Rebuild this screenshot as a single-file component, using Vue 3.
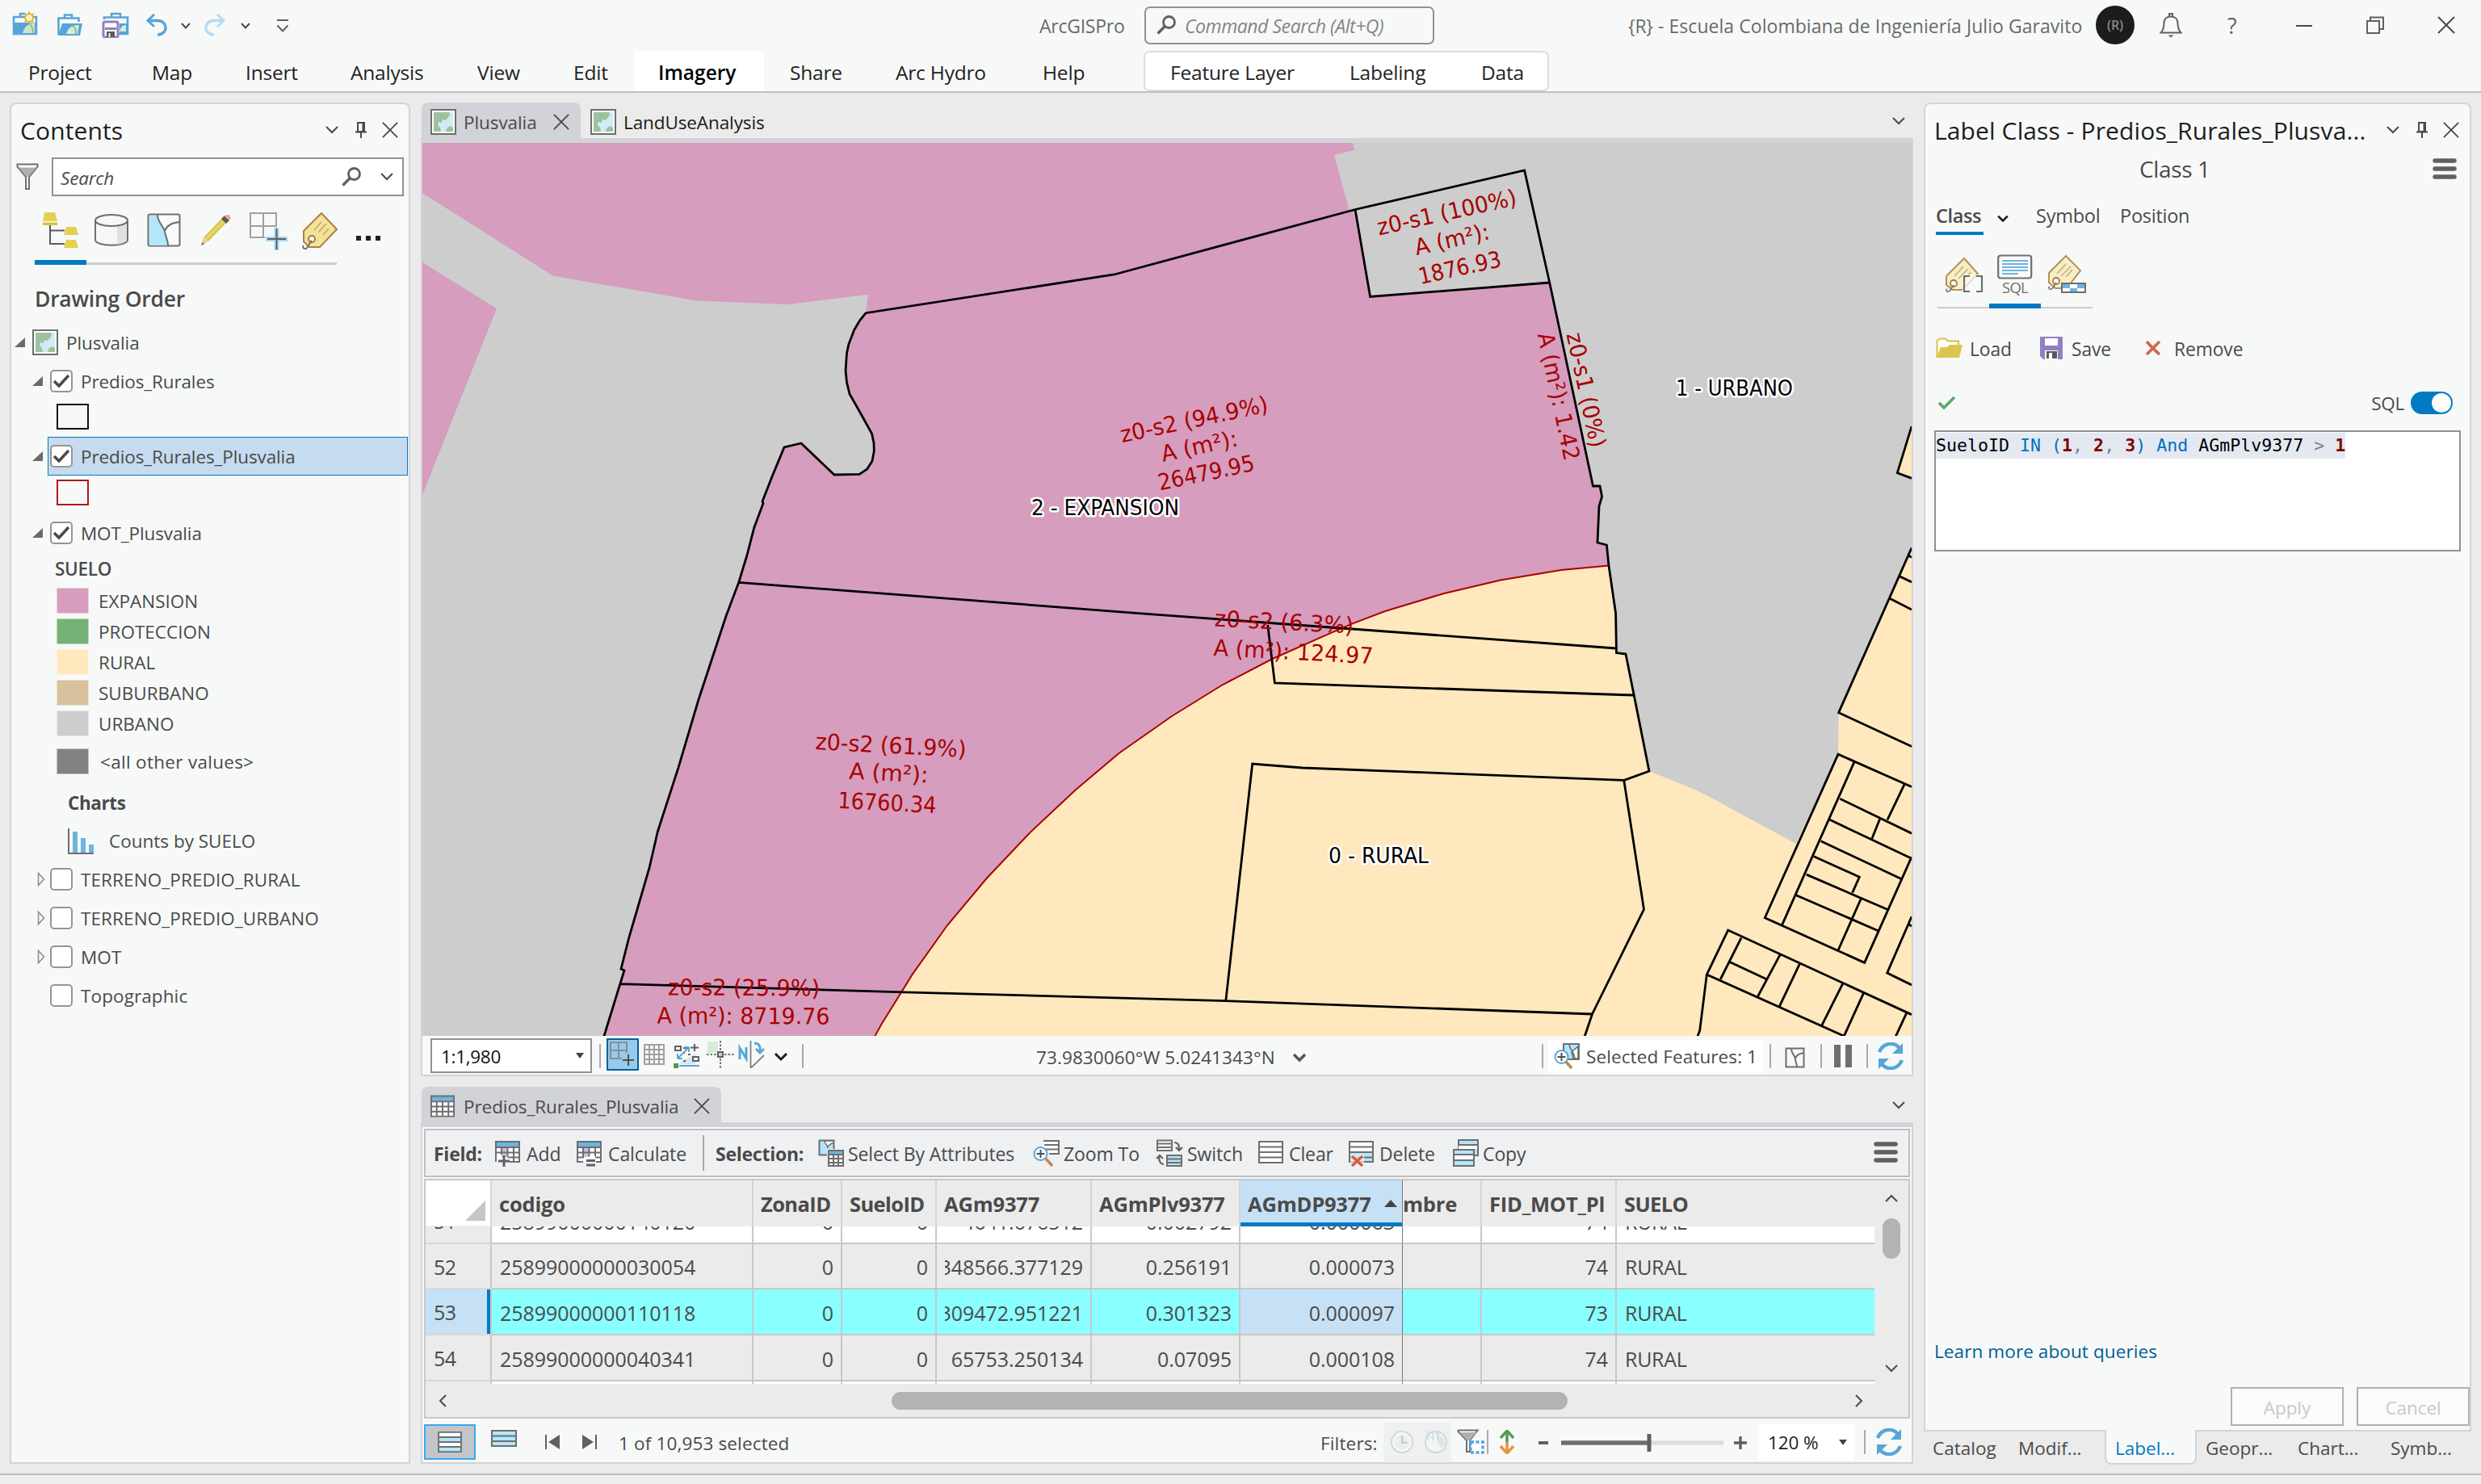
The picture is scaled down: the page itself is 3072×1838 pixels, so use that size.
<script setup>
import { h } from 'vue'

// A horizontal strip: every item starts at `at`, and its slot reaches to the next item.
const Bar = (props) => {
  const { items, from, to } = props
  return h('div', { class: 'bar' }, items.map((it, n) => {
    const next = n + 1 < items.length ? items[n + 1].at : to
    const style = { width: next - it.at + 'px' }
    if (n === 0) style.marginLeft = it.at - from + 'px'
    const inner = []
    if (it.icon) {
      inner.push(h('svg', { width: it.w, height: it.h, style: it.dy ? { marginTop: it.dy + 'px' } : undefined }, [h('use', { href: '#' + it.icon })]))
      if (it.cap) inner.push(h('span', { class: 'cap' }, it.cap))
    } else if (it.sep) {
      inner.push(h('i', { class: 'sep', style: { height: it.sep + 'px' } }))
    } else {
      inner.push(h('span', { class: it.cls }, it.text))
    }
    return h('div', { class: it.cap ? 'slot capped' : 'slot', style }, inner)
  }))
}
Bar.props = ['items', 'from', 'to']

const titleBar = [
  { at: 15, icon: 'newproj', w: 32, h: 30, dy: -4 },
  { at: 70, icon: 'openproj', w: 32, h: 30, dy: -2 },
  { at: 126, icon: 'saveproj', w: 34, h: 32 },
  { at: 180, icon: 'undo', w: 28, h: 28 },
  { at: 224, icon: 'chev', w: 12, h: 8, dy: 1 },
  { at: 252, icon: 'redo', w: 28, h: 28 },
  { at: 298, icon: 'chev', w: 12, h: 8, dy: 1 },
  { at: 342, icon: 'custom', w: 16, h: 18, dy: 2 },
  { at: 1287, text: 'ArcGISPro', cls: 'ttl' }
]
const titleRight = [
  { at: 2016, text: '{R}', cls: 'ttl' },
  { at: 2053, text: '- Escuela Colombiana de Ingeniería Julio Garavito', cls: 'ttl esc' },
  { at: 2595, text: '(R)', cls: 'avatar' },
  { at: 2674, icon: 'bell', w: 28, h: 32 },
  { at: 2758, text: '?', cls: 'help' },
  { at: 2842, icon: 'mini', w: 22, h: 4, dy: 2 },
  { at: 2930, icon: 'restore', w: 22, h: 22 },
  { at: 3018, icon: 'close', w: 22, h: 22 }
]
const ribbon = [
  { label: 'Project', pad: 35, w: 157 }, { label: 'Map', pad: 31, w: 114 },
  { label: 'Insert', pad: 33, w: 99 }, { label: 'Analysis', pad: 64, w: 161 },
  { label: 'View', pad: 60, w: 148 }, { label: 'Edit', pad: 31, w: 106 },
  { label: 'Imagery', pad: 30, w: 161, on: true }, { label: 'Share', pad: 32, w: 131 },
  { label: 'Arc Hydro', pad: 32, w: 182 }, { label: 'Help', pad: 32, w: 157 }
]
const context = [
  { at: 1449, text: 'Feature Layer' }, { at: 1671, text: 'Labeling' }, { at: 1834, text: 'Data' }
]
const contentsTools = [
  { at: 53, icon: 'tree', w: 44, h: 44 },
  { at: 117, icon: 'cyl', w: 42, h: 40 },
  { at: 182, icon: 'mapsel', w: 42, h: 42 },
  { at: 246, icon: 'pencil', w: 42, h: 42 },
  { at: 308, icon: 'snap', w: 48, h: 48, dy: 2 },
  { at: 374, icon: 'tag', w: 44, h: 46, dy: 1 },
  { at: 440, icon: 'dots', w: 34, h: 8, dy: 20 }
]
const classes = [
  ['EXPANSION', 'expansion'], ['PROTECCION', 'proteccion'], ['RURAL', 'rural'],
  ['SUBURBANO', 'suburbano'], ['URBANO', 'urbano']
]
const mapTools = [
  { at: 742, sep: 30 },
  { at: 751, icon: 'snapon', w: 40, h: 40, dy: -3 },
  { at: 796, icon: 'grid', w: 28, h: 28, dy: -3 },
  { at: 834, icon: 'survey', w: 34, h: 32, dy: 0 },
  { at: 875, icon: 'cross', w: 34, h: 34, dy: -3 },
  { at: 914, icon: 'north', w: 34, h: 34, dy: -3 },
  { at: 958, icon: 'chevb', w: 18, h: 12, dy: 2 },
  { at: 993, sep: 30 },
  { at: 1283, text: '73.9830060°W 5.0241343°N', cls: 'coord' },
  { at: 1600, icon: 'chevg', w: 18, h: 12, dy: 4 },
  { at: 1909, sep: 30 }
]
const mapRight = [
  { at: 2191, sep: 30 },
  { at: 2210, icon: 'mapout', w: 26, h: 26, dy: 4 },
  { at: 2254, sep: 30 },
  { at: 2271, icon: 'pause', w: 22, h: 28 },
  { at: 2311, sep: 30 },
  { at: 2323, icon: 'refresh', w: 36, h: 34 }
]
const tableTools = [
  { at: 537, text: 'Field:', cls: 'b' },
  { at: 613, icon: 'tadd', w: 32, h: 32, dy: 1 }, { at: 652, text: 'Add' },
  { at: 714, icon: 'tcalc', w: 32, h: 32, dy: 1 }, { at: 753, text: 'Calculate' },
  { at: 870, sep: 44 },
  { at: 886, text: 'Selection:', cls: 'b' },
  { at: 1013, icon: 'selattr', w: 32, h: 34 }, { at: 1050, text: 'Select By Attributes' },
  { at: 1279, icon: 'zoomto', w: 34, h: 34 }, { at: 1317, text: 'Zoom To' },
  { at: 1431, icon: 'switch', w: 34, h: 34 }, { at: 1470, text: 'Switch' },
  { at: 1558, icon: 'clear', w: 32, h: 28, dy: -2 }, { at: 1596, text: 'Clear' },
  { at: 1670, icon: 'delete', w: 32, h: 32, dy: 1 }, { at: 1708, text: 'Delete' },
  { at: 1799, icon: 'copy', w: 32, h: 34 }, { at: 1836, text: 'Copy' },
  { at: 2320, icon: 'burger', w: 30, h: 28, dy: -2 }
]
const cols = [
  { k: 'codigo', w: 324, t: 'codigo' },
  { k: 'zona', w: 110, t: 'ZonaID', r: true },
  { k: 'sid', w: 117, t: 'SueloID', r: true },
  { k: 'agm', w: 192, t: 'AGm9377', r: true },
  { k: 'plv', w: 184, t: 'AGmPlv9377', r: true },
  { k: 'dp', w: 201, t: 'AGmDP9377', r: true },
  { k: 'nombre', w: 98, t: 'mbre' },
  { k: 'fid', w: 167, t: 'FID_MOT_Pl', r: true },
  { k: 'use', w: 319, t: 'SUELO' }
]
const rows = [
  { n: '51', codigo: '25899000000140120', zona: '0', sid: '0', agm: '4641.676512', plv: '0.002792', dp: '0.000063', fid: '74', use: 'RURAL' },
  { n: '52', codigo: '25899000000030054', zona: '0', sid: '0', agm: '348566.377129', plv: '0.256191', dp: '0.000073', fid: '74', use: 'RURAL' },
  { n: '53', codigo: '25899000000110118', zona: '0', sid: '0', agm: '309472.951221', plv: '0.301323', dp: '0.000097', fid: '73', use: 'RURAL' },
  { n: '54', codigo: '25899000000040341', zona: '0', sid: '0', agm: '65753.250134', plv: '0.07095', dp: '0.000108', fid: '74', use: 'RURAL' },
  { n: '', codigo: '' }
]
const statusLeft = [
  { at: 608, icon: 'rowsel', w: 32, h: 22, dy: -8 },
  { at: 674, icon: 'first', w: 20, h: 20, dy: 0 },
  { at: 720, icon: 'last', w: 20, h: 20, dy: 0 },
  { at: 766, text: '1 of 10,953 selected', cls: 'stat' },
  { at: 1635, text: 'Filters:', cls: 'stat' }
]
const statusRight = [
  { at: 1804, icon: 'filtsel', w: 36, h: 32 },
  { at: 1841, sep: 30 },
  { at: 1856, icon: 'updown', w: 20, h: 30 },
  { at: 1904, icon: 'minus', w: 14, h: 6, dy: 2 },
  { at: 1932, icon: 'slider', w: 202, h: 24, dy: 2 },
  { at: 2146, icon: 'plus', w: 18, h: 18, dy: 2 }
]
const statusEnd = [
  { at: 2308, sep: 30 },
  { at: 2321, icon: 'refresh', w: 36, h: 34, dy: 1 }
]
const labelTools = [
  { at: 2408, icon: 'tagexp', w: 48, h: 46, dy: 2 },
  { at: 2473, icon: 'sqldoc', w: 44, h: 31, cap: 'SQL' },
  { at: 2536, icon: 'tagfld', w: 48, h: 48, dy: -2 }
]
const fileTools = [
  { at: 2397, icon: 'folder', w: 34, h: 26 }, { at: 2439, text: 'Load', cls: 'ft' },
  { at: 2526, icon: 'floppy', w: 28, h: 28 }, { at: 2565, text: 'Save', cls: 'ft' },
  { at: 2656, icon: 'redx', w: 20, h: 20 }, { at: 2692, text: 'Remove', cls: 'ft' }
]
const dockTabs = [
  { t: 'Catalog', w: 104, p: 9 }, { t: 'Modif...', w: 118, p: 11 }, { t: 'Label...', w: 114, p: 11, on: true },
  { t: 'Geopr...', w: 114, p: 11 }, { t: 'Chart...', w: 114, p: 11 }, { t: 'Symb...', w: 110, p: 12 }
]
const mapLabels = [
  { a: -12.5, l: [['z0-s1 (100%)', 1793.5, 272.5, 176], ['A (m²):', 1800, 306, 94], ['1876.93', 1809.5, 341, 104]] },
  { a: -12, l: [['z0-s2 (94.9%)', 1480.5, 529, 186], ['A (m²):', 1487, 562, 96], ['26479.95', 1495.5, 595, 121]] },
  { a: 3, l: [['z0-s2 (61.9%)', 1102.5, 933, 187], ['A (m²):', 1100, 967, 98], ['16760.34', 1098, 1004, 122]] },
  { a: 0.3, l: [['z0-s2 (25.9%)', 921, 1233, 188], ['A (m²): 8719.76', 920.5, 1268, 214]] },
  { a: 3, l: [['z0-s2 (6.3%)', 1589.5, 780, 172], ['A (m²): 124.97', 1601, 817, 198]] },
  { a: 78, l: [['z0-s1 (0%)', 1954.5, 485, 145], ['A (m²): 1.42', 1920.5, 493, 161]] }
]
const zoneLabels = [['2 - EXPANSION', 1277, 638, 183], ['1 - URBANO', 2075, 490, 145], ['0 - RURAL', 1645, 1069, 124]]
</script>

<template>
  <svg class="defs" width="0" height="0">
    <symbol id="chev" viewBox="0 0 12 8"><path d="M1 1l5 5.5L11 1" fill="none" stroke="#4a4a4a" stroke-width="2" /></symbol>
    <symbol id="chevl" viewBox="0 0 16 10"><path d="M1 1l7 7 7-7" fill="none" stroke="#4a4a4a" stroke-width="2" /></symbol>
    <symbol id="chevb" viewBox="0 0 18 12"><path d="M2 2l7 7 7-7" fill="none" stroke="#1a1a1a" stroke-width="3" /></symbol>
    <symbol id="chevg" viewBox="0 0 18 12"><path d="M2 2l7 7 7-7" fill="none" stroke="#555" stroke-width="3.4" /></symbol>
    <symbol id="close" viewBox="0 0 22 22"><path d="M1 1l20 20M21 1L1 21" fill="none" stroke="#4a4a4a" stroke-width="2" /></symbol>
    <symbol id="pin" viewBox="0 0 14 20"><path d="M3 1h8v11H3zM9.500 1v11M0 12.500h14M7 13v7" fill="none" stroke="#4a4a4a" stroke-width="2" /></symbol>
    <symbol id="mag" viewBox="0 0 24 24"><circle cx="15.500" cy="8.500" r="7" fill="none" stroke="#606060" stroke-width="2.800" /><path d="M10.500 13.500L1.500 22.500" stroke="#606060" stroke-width="3.400" /></symbol>
    <symbol id="newproj" viewBox="0 0 32 30"><path d="M2 7h28v21H2z" fill="#f7f9f8" stroke="#56a5d8" stroke-width="2.500" /><path d="M10 7V3h6" fill="none" stroke="#56a5d8" stroke-width="2.500" /><path d="M2 14h28v14H2z" fill="#56a5d8" /><path d="M13 27c2-8 7-12 15-13v13z" fill="#cfe3c9" /><path d="M21 15c4 3 5 8 5 12" fill="none" stroke="#8fbf8a" stroke-width="2" /><path d="M21 0v16M13 8h16M15.500 2.500l11 11M26.500 2.500l-11 11" stroke="#d9a928" stroke-width="1.600" /><circle cx="21" cy="8" r="5" fill="#fbf0b8" stroke="#d9a928" stroke-width="1.500" /></symbol>
    <symbol id="openproj" viewBox="0 0 32 30"><path d="M2.500 28V7.500h25V12M10 7V3.500h9V7" fill="none" stroke="#56a5d8" stroke-width="2.600" /><path d="M7 14h25l-3 15H2z" fill="#56a5d8" /><path d="M12 27c2-7 6-11 16-11l-2 11z" fill="#d8ecd8" /><path d="M20 17c4 3 4 6 4 10" fill="none" stroke="#8fbf8a" stroke-width="2" /></symbol>
    <symbol id="saveproj" viewBox="0 0 34 32"><path d="M3 9V6.500h29V27H20M12 6V2h11v4" fill="none" stroke="#56a5d8" stroke-width="2.600" /><path d="M22 14h9v12h-9z" fill="#56a5d8" /><path d="M22 24c1-5 4-8 8-8v8z" fill="#d8ecd8" /><rect x="2" y="12" width="18" height="19" rx="2" fill="#fff" stroke="#9180c0" stroke-width="3" /><path d="M4 20.500h14" stroke="#9180c0" stroke-width="3" /><path d="M6 24h10v7H6z" fill="#5a5a5a" /><path d="M8.500 26h2v5h-2z" fill="#fff" /></symbol>
    <symbol id="undo" viewBox="0 0 28 28"><path d="M3 8.500h12c13 0 14 17 0 17.500" fill="none" stroke="#56a5d8" stroke-width="3.400" /><path d="M11 1L3 8.500l8 7.500" fill="none" stroke="#56a5d8" stroke-width="3" /></symbol>
    <symbol id="redo" viewBox="0 0 28 28"><path d="M25 8.500H13c-13 0-14 17 0 17.500" fill="none" stroke="#b7d9ef" stroke-width="3.400" /><path d="M17 1l8 7.500-8 7.500" fill="none" stroke="#b7d9ef" stroke-width="3" /></symbol>
    <symbol id="custom" viewBox="0 0 16 18"><path d="M1 2h14" stroke="#606060" stroke-width="2" /><path d="M1.500 8.500L8 15.500l6.500-7" fill="none" stroke="#606060" stroke-width="2" /></symbol>
    <symbol id="bell" viewBox="0 0 28 32"><path d="M1.500 25.500h25C23 22 22.500 19 22.500 13.500c0-5.500-4-8-8.500-8s-8.500 2.500-8.500 8c0 5.500-.5 8.500-4 12zM12 5V2h4v3" fill="none" stroke="#606060" stroke-width="2" /><path d="M10.500 28.500h7l-3.500 3z" fill="#606060" /></symbol>
    <symbol id="mini" viewBox="0 0 22 4"><path d="M1 2h20" stroke="#4a4a4a" stroke-width="2" /></symbol>
    <symbol id="restore" viewBox="0 0 22 22"><path d="M1 6h15v15H1zM5 6V1.500h16V16h-5" fill="none" stroke="#606060" stroke-width="2" /></symbol>
    <symbol id="funnel" viewBox="0 0 28 34"><path d="M1.500 1.500h25v3L16 17v15h-4V17L1.500 4.500z" fill="#fff" stroke="#6e6e6e" stroke-width="2" /><path d="M3 5.500h22L15.500 17h-3z" fill="#b0b0b0" /></symbol>
    <symbol id="mapicon" viewBox="0 0 32 32"><path d="M1 1h30v30H1z" fill="#fff" stroke="#6e6e6e" stroke-width="2" /><path d="M4 4h24v24H4z" fill="#9cc29b" /><path d="M24 4h4v19l-4-2-4 3-1 4h-6l-1-5-3-3 1-4 4 1 1-4 4 1 4-5z" fill="#d3e9f7" /></symbol>
    <symbol id="tree" viewBox="0 0 44 44"><path d="M2 0h13l3 11H0z" fill="#e4d04f" /><path d="M0 12.500h18V16H0z" fill="#d8c238" /><path d="M9 16v23h18M9 22.500h18" fill="none" stroke="#5a5a5a" stroke-width="2" /><path d="M29 18h12l3 10H26zM29 34h12l3 10H26z" fill="#e4d04f" /></symbol>
    <symbol id="cyl" viewBox="0 0 42 40"><path d="M1 8v24c0 9 40 9 40 0V8z" fill="#f7f7f7" stroke="#6e6e6e" stroke-width="2" /><path d="M28 14l12-4v22c-2 3-6 5-12 6z" fill="#e0e0e0" /><ellipse cx="21" cy="8" rx="20" ry="7" fill="#f7f7f7" stroke="#6e6e6e" stroke-width="2" /></symbol>
    <symbol id="mapsel" viewBox="0 0 42 42"><rect x="1.500" y="1.500" width="39" height="39" rx="2" fill="#fafafa" stroke="#6e6e6e" stroke-width="2" /><path d="M3 3h10c0 10 8 12 8 20 1 6 5 10 5 17H3z" fill="#b2e6fa" /><path d="M13 2c0 10 8 14 9 21 1 6 4 11 4 17M22 22c2-6 8-10 18-11" fill="none" stroke="#6e6e6e" stroke-width="2" /></symbol>
    <symbol id="pencil" viewBox="0 0 42 42"><path d="M6 30l6 5L37 9l-6-5z" fill="#dcc74a" /><path d="M8 33L34 7" stroke="#efe08a" stroke-width="1.500" /><path d="M28 7l6 6 4-4-6-6z" fill="#5a5a5a" /><path d="M32 4c4-5 10 0 6 5z" fill="#f0a090" /><path d="M6 30l6 5-9 5z" fill="#e8cfa0" /><path d="M3 40l2-4 2 2z" fill="#5a5a5a" /></symbol>
    <symbol id="snap" viewBox="0 0 48 48"><path d="M2 2h32v30H2zM2 18h32M18 2v30" fill="none" stroke="#a0a0a0" stroke-width="2" /><path d="M20 19h16v14H20z" fill="#f7f9f8" /><path d="M34.500 20v28M21 34h27" stroke="#a5d8f7" stroke-width="6" /><path d="M34.500 21v26M23 34h23" stroke="#606060" stroke-width="2" /></symbol>
    <symbol id="tag" viewBox="0 0 44 46"><path d="M24 1l19 20-21 22H9l-7-7V23z" fill="#f3e398" stroke="#b0804a" stroke-width="2" /><path d="M15 22l9-10M20 25l10-11M26 28l7-8" stroke="#c9a070" stroke-width="1.500" /><circle cx="12" cy="33" r="4" fill="#fff" stroke="#a87840" stroke-width="2" /><path d="M12 35c-4 4-4 8-7 10-3 1-5-2-3-4" fill="none" stroke="#6e6e6e" stroke-width="1.800" /></symbol>
    <symbol id="dots" viewBox="0 0 34 8"><path d="M1 1h6v6H1zM13 1h6v6h-6zM25 1h6v6h-6z" fill="#222" /></symbol>
    <symbol id="tick" viewBox="0 0 20 16"><path d="M1 8l6 6L19 1" fill="none" stroke="#4a4a4a" stroke-width="3.600" /></symbol>
    <symbol id="bars" viewBox="0 0 32 32"><path d="M6 4h6v26H6zM16 12h6v18h-6zM26 20h6v10h-6z" fill="#6cb4e2" /><path d="M1 0v31h31" fill="none" stroke="#6e6e6e" stroke-width="2" /></symbol>
    <symbol id="snapon" viewBox="0 0 40 40"><path d="M1 1h38v38H1z" fill="#97caeb" stroke="#00619b" stroke-width="2" /><path d="M5 5h20v20H5zM5 15h20M15 5v20" fill="none" stroke="#8a8f94" stroke-width="2" /><path d="M19 18h8v8h-8z" fill="#97caeb" /><path d="M27 20v14M20 27h14" stroke="#505050" stroke-width="2" /></symbol>
    <symbol id="grid" viewBox="0 0 28 28"><path d="M2 2h24v24H2zM2 8h24M2 14h24M2 20h24M8 2v24M14 2v24M20 2v24" fill="none" stroke="#a0a0a0" stroke-width="2" /></symbol>
    <symbol id="survey" viewBox="0 0 34 32"><path d="M5 26l22-13v13z" fill="#cfe8f7" /><path d="M2 4h7v5H2zM24 17h7v5h-7z" fill="#fff" stroke="#606060" stroke-width="2" /><path d="M26 1v9M21 5.500h10M12 6h6M12 12h2M18 14h3M12 22h3" stroke="#606060" stroke-width="2" /><path d="M19 5L5 19M19 5h-6M19 5v6M5 19v-6M5 19h6M7 28h25" fill="none" stroke="#56a5d8" stroke-width="2" /><path d="M0 25h6v6H0z" fill="#4f9a52" /></symbol>
    <symbol id="cross" viewBox="0 0 34 34"><path d="M1 1h13v14H1z" fill="#d8ebd6" /><path d="M17 0v12M17 22v12M0 17h12M22 17h12" stroke="#6e6e6e" stroke-width="2" stroke-dasharray="2.500 2" /><path d="M14 14h6v6h-6z" fill="#ccc" stroke="#606060" stroke-width="2" /></symbol>
    <symbol id="north" viewBox="0 0 34 34"><path d="M2 23V9l8 13V8" fill="none" stroke="#56a5d8" stroke-width="3" /><path d="M15.500 0v34L32 18" fill="none" stroke="#808080" stroke-width="1.800" /><path d="M20 3c6 0 8 4 7 11M22 10l5 5 5-5" fill="none" stroke="#56a5d8" stroke-width="2.800" /></symbol>
    <symbol id="zoomsel" viewBox="0 0 34 34"><path d="M12 2h19v19H12z" fill="#b2e6fa" stroke="#6e6e6e" stroke-width="2" /><path d="M19 3c1 7 6 8 7 17M22 12l8-7V20H24z" fill="#fff" stroke="#6e6e6e" stroke-width="1.600" /><circle cx="9.500" cy="18" r="8" fill="#fff" stroke="#56a5d8" stroke-width="2" /><path d="M9.500 13v10M4.500 18h10" stroke="#505050" stroke-width="2" /><path d="M15 24l7 8" stroke="#c08a50" stroke-width="3.600" /></symbol>
    <symbol id="mapout" viewBox="0 0 26 26"><path d="M1.500 1.500h22v23h-22zM8 2c0 7 5 7 5 13 0 4 2 5 2 9M13 14c1-4 5-6 10-7" fill="none" stroke="#6e6e6e" stroke-width="2" /></symbol>
    <symbol id="pause" viewBox="0 0 22 28"><path d="M0 0h8v28H0zM14 0h8v28h-8z" fill="#6e6e6e" /></symbol>
    <symbol id="refresh" viewBox="0 0 36 34"><path d="M4 12C9 0 22-1 29 7" fill="none" stroke="#56a5d8" stroke-width="4.500" /><path d="M33 1v13H20z" fill="#56a5d8" /><path d="M32 22C27 34 14 35 7 27" fill="none" stroke="#56a5d8" stroke-width="4.500" /><path d="M3 33V20h13z" fill="#56a5d8" /></symbol>
    <symbol id="tbl" viewBox="0 0 32 28"><path d="M1 1h29v26H1z" fill="#fff" /><path d="M1 1h29v6H1z" fill="#6cb4e2" /><path d="M1 1h29v26H1zM1 8h29M1 14.500h29M1 21h29M8 8v19M15.500 8v19M23 8v19" fill="none" stroke="#6e6e6e" stroke-width="2" /></symbol>
    <symbol id="tadd" viewBox="0 0 32 32"><path d="M1 1h29v25H1z" fill="#fff" /><path d="M8 8h8v12H8z" fill="#c9bfe3" /><path d="M1 1h29v6H1z" fill="#6cb4e2" /><path d="M1 26V1h29v25H18M1 8h29M1 14.500h29M16 20.500h14M8 8v9M15.500 8v12M23 8v18" fill="none" stroke="#6e6e6e" stroke-width="2" /><path d="M11 18v14M4 25h14" stroke="#606060" stroke-width="3" /></symbol>
    <symbol id="tcalc" viewBox="0 0 32 32"><path d="M1 1h29v25H1z" fill="#fff" /><path d="M8 8h8v12H8z" fill="#c9bfe3" /><path d="M1 1h29v6H1z" fill="#6cb4e2" /><path d="M8 26H1V1h29v25h-6M1 8h29M1 14.500h29M1 20.500h8M23 20.500h7M8 8v12M15.500 8v11M23 8v11" fill="none" stroke="#6e6e6e" stroke-width="2" /><path d="M12 24.500h11M12 30h11" stroke="#606060" stroke-width="3" /></symbol>
    <symbol id="selattr" viewBox="0 0 32 34"><path d="M1.500 1.500h18v18h-18z" fill="#b2e6fa" stroke="#6e6e6e" stroke-width="2" /><path d="M8 2c0 4 3 4 4 8 2-4 4-5 7-5V2z" fill="#fff" stroke="#6e6e6e" stroke-width="1.500" /><path d="M11 12h21v22H11z" fill="#eef0f2" /><path d="M13 14h18v19H13z" fill="#fff" /><path d="M13 14h18v5H13z" fill="#6cb4e2" /><path d="M13 14h18v19H13zM13 19h18M13 24h18M13 29h18M19 19v14M25 19v14" fill="none" stroke="#6e6e6e" stroke-width="2" /></symbol>
    <symbol id="zoomto" viewBox="0 0 34 34"><path d="M13 1h19v18H13z" fill="#fff" /><path d="M13 2h19v16H20M14 7h18M16 12.500h16" fill="none" stroke="#6e6e6e" stroke-width="2" /><circle cx="9.500" cy="18" r="8" fill="#fff" stroke="#56a5d8" stroke-width="2" /><path d="M9.500 13v10M4.500 18h10" stroke="#505050" stroke-width="2" /><path d="M16 24l8 9" stroke="#c08a50" stroke-width="3.600" /></symbol>
    <symbol id="switch" viewBox="0 0 34 34"><path d="M2 1h18v13H2z" fill="#fff" /><path d="M2 1.500h18V14H2zM2 5.500h18M2 10h18" fill="none" stroke="#6e6e6e" stroke-width="2" /><path d="M14 19h18v14H14z" fill="#b2e6fa" /><path d="M14 20h18v13H14zM14 24.500h18M14 29h18" fill="none" stroke="#6e6e6e" stroke-width="2" /><path d="M23 4c6 0 6 5 6 9M25 10l4 4 4-4M10 31c-5 0-6-4-6-10M1 24l4-4 4 4" fill="none" stroke="#606060" stroke-width="2.200" /></symbol>
    <symbol id="clear" viewBox="0 0 32 28"><path d="M1 1h29v26H1z" fill="#fff" stroke="#6e6e6e" stroke-width="2" /><path d="M1 7.500h29M1 14h29M1 20.500h29" stroke="#6e6e6e" stroke-width="2" /></symbol>
    <symbol id="delete" viewBox="0 0 32 32"><path d="M1 1h29v25H1z" fill="#fff" /><path d="M1 14h29v12H1z" fill="#b2e6fa" /><path d="M1 1h29v25H1zM1 7.500h29M1 14h29M1 20.500h29" fill="none" stroke="#6e6e6e" stroke-width="2" /><path d="M2 17h17v15H2z" fill="#eef0f2" opacity=".7" /><path d="M4 19l13 12M17 19L4 31" stroke="#d0603c" stroke-width="3.400" /></symbol>
    <symbol id="copy" viewBox="0 0 32 34"><path d="M7 1h24v19H7z" fill="#b2e6fa" stroke="#6e6e6e" stroke-width="2" /><path d="M7 7h24" stroke="#6e6e6e" stroke-width="2" /><path d="M7 8h23v4H7z" fill="#fff" /><path d="M1 13h25v20H1z" fill="#b2e6fa" stroke="#6e6e6e" stroke-width="2" /><path d="M2 20h23v5H2z" fill="#fff" /><path d="M1 19h25M1 26h25" stroke="#6e6e6e" stroke-width="2" /></symbol>
    <symbol id="burger" viewBox="0 0 30 28"><path d="M3 4h24M3 14h24M3 24h24" stroke="#606060" stroke-width="5.500" stroke-linecap="round" /></symbol>
    <symbol id="rowall" viewBox="0 0 32 28"><path d="M1 1h30v26H1z" fill="#fff" /><path d="M1 8h30v6H1zM1 21h30v6H1z" fill="#b2e6fa" /><path d="M1 1h30v26H1zM1 7.500h30M1 14h30M1 20.500h30" fill="none" stroke="#6e6e6e" stroke-width="2" /></symbol>
    <symbol id="rowsel" viewBox="0 0 32 22"><path d="M1 1h30v19H1z" fill="#b2e6fa" stroke="#6e6e6e" stroke-width="2" /><path d="M1 7.500h30M1 14h30" stroke="#6e6e6e" stroke-width="2" /></symbol>
    <symbol id="first" viewBox="0 0 20 20"><path d="M2 1v18" stroke="#606060" stroke-width="2" /><path d="M19 1v18L5 10z" fill="#606060" /></symbol>
    <symbol id="last" viewBox="0 0 20 20"><path d="M18 1v18" stroke="#606060" stroke-width="2" /><path d="M1 1v18l14-9z" fill="#606060" /></symbol>
    <symbol id="clock" viewBox="0 0 32 32"><circle cx="16" cy="16" r="14" fill="#f4f6f6" stroke="#d3d6d8" stroke-width="2" /><circle cx="16" cy="16" r="10" fill="#e8f0e8" /><path d="M16 8v9h7" fill="none" stroke="#c6ccd0" stroke-width="2.500" /></symbol>
    <symbol id="globe" viewBox="0 0 32 32"><circle cx="16" cy="16" r="14" fill="#f4f6f6" stroke="#d3d6d8" stroke-width="2" /><path d="M18 6l8 4 2 8-4 6-5-5-2-6z" fill="#dceadb" /><path d="M6 1v13M12 1v13M18 1v13M3 5h6M9 10h6M15 5h6" stroke="#cfdde6" stroke-width="2" /></symbol>
    <symbol id="filtsel" viewBox="0 0 36 32"><path d="M1.500 1.500h24L16 14v14h-4V14L1.500 3z" fill="#fff" stroke="#6e6e6e" stroke-width="2" /><path d="M3 4h21l-8.500 10h-3z" fill="#b0b0b0" /><path d="M17 16h15v13H17z" fill="#fff" stroke="#56a5d8" stroke-width="3.500" stroke-dasharray="4 2.500" /></symbol>
    <symbol id="updown" viewBox="0 0 20 30"><path d="M10 3v12" stroke="#559a58" stroke-width="3.600" /><path d="M2 10l8-9 8 9" fill="none" stroke="#559a58" stroke-width="3.400" /><path d="M10 15v12" stroke="#e8953c" stroke-width="3.600" /><path d="M2 20l8 9 8-9" fill="none" stroke="#e8953c" stroke-width="3.400" /></symbol>
    <symbol id="minus" viewBox="0 0 14 6"><path d="M1 3h12" stroke="#606060" stroke-width="4" /></symbol>
    <symbol id="plus" viewBox="0 0 18 18"><path d="M1 9h16M9 1v16" stroke="#606060" stroke-width="3.400" /></symbol>
    <symbol id="slider" viewBox="0 0 202 24"><path d="M1 12h108" stroke="#6e6e6e" stroke-width="5.500" /><path d="M110 12h92" stroke="#dcdcdc" stroke-width="5.500" /><path d="M110 1v22" stroke="#606060" stroke-width="5" /></symbol>
    <symbol id="tagexp" viewBox="0 0 48 46"><path d="M24 2l17 19-19 20H10l-8-6V24z" fill="#f5efc6" stroke="#b8905a" stroke-width="2" /><path d="M12 24l11-12M17 27l12-12M24 28l8-9" stroke="#d0a878" stroke-width="1.500" /><circle cx="11" cy="33" r="4" fill="#fff" stroke="#a87840" stroke-width="1.800" /><path d="M11 35c-3 3-3 7-6 8-3 1-4-2-2-3" fill="none" stroke="#6e6e6e" stroke-width="1.600" /><path d="M22 22h26v23H22z" fill="#f7f9f8" opacity=".75" /><path d="M31 24h-7v19h7M39 24h7v19h-7" fill="none" stroke="#6e6e6e" stroke-width="2.200" /></symbol>
    <symbol id="sqldoc" viewBox="0 0 44 31"><rect x="1.200" y="1.500" width="41" height="28" rx="3" fill="#fafafa" stroke="#6e6e6e" stroke-width="2.200" /><path d="M6 8h32M6 12h32M6 16h32M6 20h32M6 24h20" stroke="#6cb4e2" stroke-width="2" /></symbol>
    <symbol id="tagfld" viewBox="0 0 48 48"><path d="M22 2l18 18-17 22H9l-8-7V23z" fill="#f5efc6" stroke="#b8905a" stroke-width="2" /><path d="M11 24l11-12M16 27l12-12M22 28l8-9" stroke="#d0a878" stroke-width="1.500" /><circle cx="10" cy="33" r="4" fill="#fff" stroke="#a87840" stroke-width="1.800" /><path d="M10 35c-3 3-3 7-6 8-3 1-4-2-2-3" fill="none" stroke="#6e6e6e" stroke-width="1.600" /><path d="M17 36h29v11H17z" fill="#fff" stroke="#6e6e6e" stroke-width="2" /><path d="M18 37h9v5h-9zM36 37h9v5h-9zM27 42h9v4h-9z" fill="#6cb4e2" /></symbol>
    <symbol id="folder" viewBox="0 0 34 26"><path d="M1.500 25V3.500L5 1.500h7l3 3h13V9" fill="#fff" stroke="#d8c24a" stroke-width="2" /><path d="M6 12h8l3-3h16l-4 16H1z" fill="#dac64c" /></symbol>
    <symbol id="floppy" viewBox="0 0 28 28"><path d="M0 0h28v28H4l-4-4z" fill="#9180c0" /><path d="M6 2h16v9H6z" fill="#fff" /><path d="M6 17h16v11H6z" fill="#fff" /><path d="M8 18h13v9H8z" fill="#5a5a5a" /><path d="M11 20h4v7h-4z" fill="#fff" /></symbol>
    <symbol id="redx" viewBox="0 0 20 20"><path d="M2 2c5 6 10 11 16 16M18 2C12 8 7 13 2 18" stroke="#cf6a48" stroke-width="3.600" fill="none" /></symbol>
  </svg>

  <div class="app">
    <header class="title">
      <Bar :items="titleBar" :from="0" :to="1417" />
      <div class="cmd"><svg width="24" height="24"><use href="#mag" /></svg><span>Command Search (Alt+Q)</span></div>
      <Bar :items="titleRight" :from="1776" :to="3072" />
    </header>
    <nav class="ribbon">
      <div v-for="t in ribbon" :key="t.label" class="rtab" :class="{ on: t.on }" :style="{ width: t.w + 'px', paddingLeft: t.pad + 'px' }">{{ t.label }}</div>
      <div class="ctx"><Bar :items="context" :from="1418" :to="1916" /></div>
    </nav>

    <main>
      <aside class="contents">
        <div class="phead">
          <h1>Contents</h1>
          <svg class="c1" width="16" height="10"><use href="#chevl" /></svg>
          <svg class="c2" width="14" height="20"><use href="#pin" /></svg>
          <svg class="c3" width="20" height="20"><use href="#close" /></svg>
        </div>
        <div class="searchrow">
          <svg width="28" height="34"><use href="#funnel" /></svg>
          <div class="search"><span>Search</span><svg width="24" height="24"><use href="#mag" /></svg><svg class="sc" width="16" height="10"><use href="#chevl" /></svg></div>
        </div>
        <div class="ctools"><Bar :items="contentsTools" :from="14" :to="506" /></div>
        <div class="cline"><i></i></div>
        <h2>Drawing Order</h2>
        <div class="row root"><b class="open"></b><svg width="32" height="32"><use href="#mapicon" /></svg><span>Plusvalia</span></div>
        <div class="row lay"><b class="open"></b><div class="box"><i class="chk"><svg width="20" height="16"><use href="#tick" /></svg></i><span>Predios_Rurales</span></div></div>
        <div class="row sw s1"><i class="sym black"></i></div>
        <div class="row lay"><b class="open"></b><div class="box sel"><i class="chk"><svg width="20" height="16"><use href="#tick" /></svg></i><span>Predios_Rurales_Plusvalia</span></div></div>
        <div class="row sw s2"><i class="sym crimson"></i></div>
        <div class="row lay"><b class="open"></b><div class="box"><i class="chk"><svg width="20" height="16"><use href="#tick" /></svg></i><span>MOT_Plusvalia</span></div></div>
        <div class="row suelo">SUELO</div>
        <div v-for="c in classes" :key="c[0]" class="row cls"><i class="sym" :class="c[1]"></i><span>{{ c[0] }}</span></div>
        <div class="row cls other"><i class="sym rest"></i><span>&lt;all other values&gt;</span></div>
        <div class="row charts">Charts</div>
        <div class="row chart"><svg width="32" height="32"><use href="#bars" /></svg><span>Counts by SUELO</span></div>
        <div v-for="n in ['TERRENO_PREDIO_RURAL', 'TERRENO_PREDIO_URBANO', 'MOT', 'Topographic']" :key="n" class="row lay caps">
          <svg class="shut" width="13" height="18" :class="{ hid: n === 'Topographic' }"><path d="M4.500 1.500v15l7-7.500z" fill="none" stroke="#8a8a8a" stroke-width="1.500" /></svg>
          <div class="box"><i class="chk"></i><span>{{ n }}</span></div>
        </div>
      </aside>

      <section class="center">
        <div class="tabs">
          <div class="dtab on t1"><svg width="32" height="32"><use href="#mapicon" /></svg><span>Plusvalia</span><svg width="20" height="20"><use href="#close" /></svg></div>
          <div class="dtab t2"><svg width="32" height="32"><use href="#mapicon" /></svg><span>LandUseAnalysis</span></div>
          <svg class="tchev" width="16" height="10"><use href="#chevl" /></svg>
        </div>
        <div class="strip"></div>
        <div class="mapwrap">
          <svg class="map" width="1844" height="1106" viewBox="523 177 1844 1106">
            <rect x="523" y="177" width="1844" height="1106" fill="#cdcdcd" />
            <path fill="#d69dbe" d="M523 177H1675L1677 186 1652 192 1670.500 260 1678 259.500 1696.600 367.500 1918.700 350 1972.500 602 1981 602 1983.600 615 1980 627 1978 672 1989.400 675 1992 700.500 2040 1284H747.700L767.800 1218.700 773 1202 769 1200 778.700 1161.700 804 1075 814.300 1030 840 950.600 864.800 867 899 763 914.700 721.400 925 687.500 933.700 653.700 945 623.400 956.600 588.800 971 554 992 549 1033 588 1064 587.400 1073.700 581 1080 571 1082.300 558.500 1082 549 1079.500 537 1064.500 510 1052 488 1048.500 473.500 1047 459 1048.500 437.500 1050.800 426.600 1057.700 408.600 1064.500 397 1072 387.700 1075 364.700 976 377 863 372.600 684.500 341.600 523 239zM523 325L615 382 523 613z" />
            <path fill="#ffe8bd" d="M1992 700.500L1933 706 1858 718.500 1788 735 1715 757 1674 772.600 1632.700 790.600 1574.500 816.500 1514 848 1451 887 1385.400 933 1331 979 1276 1030.600 1222 1087.500 1173 1146 1130 1206.400 1091.500 1268.400 1083 1284H2367V678.600L2276.700 882.700 2276 934 2224 1045 2206.700 1035.700 2120 988.800 2100 978.600 2042 955 2013 810 2001.500 808.600 2000.600 759.600zM2349.300 585.700L2367 528V592.300z" />
            <path class="arc" d="M1992 700.500L1933 706 1858 718.500 1788 735 1715 757 1674 772.600 1632.700 790.600 1574.500 816.500 1514 848 1451 887 1385.400 933 1331 979 1276 1030.600 1222 1087.500 1173 1146 1130 1206.400 1091.500 1268.400 1083 1284" />
            <path class="lot" d="M747.700 1284L767.800 1218.700 773 1202 769 1200 778.700 1161.700 804 1075 814.300 1030 840 950.600 864.800 867 899 763 914.700 721.400 925 687.500 933.700 653.700 945 623.400 944 621 956.600 588.800 971 554 992 549 1033 588 1064 587.400 1073.700 581 1080 571 1082.300 558.500 1082 549 1079.500 537 1064.500 510 1052 488 1048.500 473.500 1047 459 1048.500 437.500 1050.800 426.600 1057.700 408.600 1064.500 397 1072 387.700 1379.700 340 1678 259.500 1887.600 211 1918.700 350 1972.500 602 1981 602 1983.600 615 1980 627 1978 672 1989.400 675 1992 700.500 2000.600 759.600 2001.500 808.600 2013 810 2042 955 2010.800 966.400 2035.500 1126.400 1971.500 1256 1962 1284M1678 259.500L1696.600 367.500 1918.700 350M914.700 721.400L1410 759.600 2001 803M1569.700 774L1578.400 846 2006 860.500 2022.400 861M2010.800 966.400L1613 951 1550.700 946 1517.800 1239.600M767.800 1218.700L1118.500 1228.800 1517.800 1239.600 1971.500 1256" />
            <g transform="translate(2100 500) scale(.33333 .5102)">
              <path class="lot" d="M801 55L748 168 801 181M801 350L530 750 801 832M790 369L801 373M756 419L801 433M720 473L801 500M801 930L528 851 256 1248 626 1357 801 1100M589 868L320 1265M775 923L711 1010M535 959L801 1043M497 1010L801 1104M683 1008L653 1057M464 1062L767 1155M438 1099L607 1149 581 1187M410 1143L712 1228M372 1193L678 1280M614 1200L528 1327M801 1245L710 1382 801 1411M790 1264L801 1268M801 1483L119 1278 40 1386 550 1535M40 1386L14 1522 5 1537M168 1297L91 1397M124 1355L262 1397M312 1338L228 1441M385 1360L308 1466M545 1408L466 1511M623 1430L550 1535M783 1478L741 1537" />
            </g>
            <g v-for="(g, i) in mapLabels" :key="i" class="rl">
              <text v-for="l in g.l" :key="l[0]" :x="l[1]" :y="l[2]" :textLength="l[3]" lengthAdjust="spacingAndGlyphs" :transform="`rotate(${g.a} ${l[1]} ${l[2]})`">{{ l[0] }}</text>
            </g>
            <text v-for="z in zoneLabels" :key="z[0]" class="zl" :x="z[1]" :y="z[2]" :textLength="z[3]" lengthAdjust="spacingAndGlyphs">{{ z[0] }}</text>
          </svg>
        </div>
        <div class="mapbar">
          <div class="scale"><span>1:1,980</span><i class="tri"></i></div>
          <Bar :items="mapTools" :from="733" :to="1917" />
          <div class="selfeat"><svg width="34" height="34"><use href="#zoomsel" /></svg><span>Selected Features: 1</span></div>
          <Bar :items="mapRight" :from="2183" :to="2367" />
        </div>

        <div class="tabs tt">
          <div class="dtab on t3"><svg width="31" height="28"><use href="#tbl" /></svg><span>Predios_Rurales_Plusvalia</span><svg width="20" height="20"><use href="#close" /></svg></div>
          <svg class="tchev" width="16" height="10"><use href="#chevl" /></svg>
        </div>
        <div class="strip"></div>
        <div class="tpane">
          <div class="ttools"><Bar :items="tableTools" :from="527" :to="2363" /></div>
          <div class="table">
            <div class="tmain">
              <div class="grid">
                <div class="thead">
                  <div class="corner"><i></i></div>
                  <div v-for="c in cols" :key="c.k" class="th" :class="c.k" :style="{ width: c.w + 'px' }"><span>{{ c.t }}</span><i v-if="c.k === 'dp'" class="asc"></i></div>
                </div>
                <div class="tbody">
                  <div v-for="(r, i) in rows" :key="i" class="tr" :class="{ alt: i === 1 || i === 3, cur: r.n === '53' }">
                    <div class="rh">{{ r.n }}</div>
                    <div v-for="c in cols" :key="c.k" class="td" :class="[c.k, { r: c.r }]" :style="{ width: c.w + 'px' }"><div class="in"><span>{{ r[c.k] }}</span></div></div>
                  </div>
                </div>
              </div>
              <div class="vs">
                <svg width="16" height="10"><path d="M1 9l7-7 7 7" fill="none" stroke="#4a4a4a" stroke-width="2" /></svg>
                <i></i>
                <svg class="dn" width="16" height="10"><use href="#chevl" /></svg>
              </div>
            </div>
            <div class="hs">
              <svg width="10" height="16"><path d="M9 1L2 8l7 7" fill="none" stroke="#4a4a4a" stroke-width="2" /></svg>
              <i></i>
              <svg class="rt" width="10" height="16"><path d="M1 1l7 7-7 7" fill="none" stroke="#4a4a4a" stroke-width="2" /></svg>
            </div>
          </div>
          <div class="status">
            <div class="allbtn"><svg width="30" height="26"><use href="#rowall" /></svg></div>
            <Bar :items="statusLeft" :from="589" :to="1713" />
            <div class="dis"><svg width="30" height="30"><use href="#clock" /></svg><svg width="30" height="30"><use href="#globe" /></svg></div>
            <Bar :items="statusRight" :from="1797" :to="2177" />
            <div class="pct"><span>120 %</span><i class="tri"></i></div>
            <Bar :items="statusEnd" :from="2296" :to="2365" />
          </div>
        </div>
      </section>

      <aside class="right">
        <div class="rpanel">
          <div class="phead">
            <h1>Label Class - Predios_Rurales_Plusva...</h1>
            <svg class="c1" width="16" height="10"><use href="#chevl" /></svg>
            <svg class="c2" width="14" height="20"><use href="#pin" /></svg>
            <svg class="c3" width="20" height="20"><use href="#close" /></svg>
          </div>
          <div class="cname"><span>Class 1</span><svg width="30" height="28"><use href="#burger" /></svg></div>
          <div class="ltabs"><span class="on">Class</span><svg width="16" height="10"><use href="#chevb" /></svg><span class="sy">Symbol</span><span>Position</span></div>
          <div class="ltools"><Bar :items="labelTools" :from="2384" :to="3000" /></div>
          <div class="lline"><i></i></div>
          <div class="ftools"><Bar :items="fileTools" :from="2384" :to="3000" /></div>
          <div class="sqlrow">
            <svg width="24" height="18"><path d="M2 9l6 6L21 2" fill="none" stroke="#5fa863" stroke-width="3.600" /></svg>
            <span>SQL</span><div class="toggle"><i></i></div>
          </div>
          <div class="code"><pre>SueloID <em>IN</em> <em>(</em><b>1</b><u>,</u> <b>2</b><u>,</u> <b>3</b><em>)</em> <em>And</em> AGmPlv9377 <u>&gt;</u> <b>1</b></pre></div>
          <a class="learn">Learn more about queries</a>
          <div class="btns"><div>Apply</div><div>Cancel</div></div>
        </div>
        <div class="dock">
          <div v-for="d in dockTabs" :key="d.t" :class="{ on: d.on }" :style="{ width: d.w + 'px', paddingLeft: d.p + 'px' }">{{ d.t }}</div>
        </div>
      </aside>
    </main>
    <footer></footer>
  </div>
</template>

<style>
body { margin: 0; background: #ebebeb; }
</style>

<style scoped>
* { box-sizing: border-box; }
.defs { display: block; height: 0; }
.app { width: 3072px; height: 1838px; display: flex; flex-direction: column; overflow: hidden; background: #ebebeb; font-family: "Open Sans", "Noto Sans", sans-serif; font-size: 22.5px; letter-spacing: -0.08px; color: #4a4a4a; white-space: nowrap; }
svg { display: block; flex: none; }
i, em { font-style: normal; }
u { text-decoration: none; }
:deep(.bar) { display: flex; align-items: center; height: 100%; }
:deep(.slot) { flex: none; display: flex; align-items: center; box-sizing: border-box; }
:deep(.slot svg) { display: block; flex: none; }
:deep(.capped) { flex-direction: column; align-items: flex-start; }
:deep(.cap) { width: 44px; height: 19px; line-height: 19px; text-align: center; font-size: 18.500px; font-weight: 500; letter-spacing: -0.8px; color: #6e6e6e; }
:deep(.sep) { width: 2px; background: #a8abab; }

.title { height: 62px; display: flex; align-items: center; background: #f7f9f8; flex: none; }
:deep(.ttl) { color: #6a6a6a; font-size: 23px; letter-spacing: -0.25px; padding-top: 1px; }
:deep(.esc) { letter-spacing: 0.05px; }
:deep(.avatar) { width: 48px; height: 48px; border-radius: 50%; background: #1c1c1c; color: #8a8a8a; font-size: 16px; font-weight: 600; display: flex; align-items: center; justify-content: center; }
:deep(.help) { font-size: 27px; color: #606060; }
.cmd { width: 359px; height: 47px; border: 2px solid #8f9291; border-radius: 7px; display: flex; align-items: center; padding-left: 13px; font-style: italic; color: #858585; font-size: 23px; letter-spacing: -0.45px; flex: none; }
.cmd span { margin-left: 11px; padding-top: 2px; }
.ribbon { height: 53px; display: flex; background: #f7f9f8; border-bottom: 2px solid #bdbfc3; flex: none; padding-top: 1px; font-size: 24.500px; letter-spacing: -0.2px; color: #222; }
.rtab { height: 50px; line-height: 54px; flex: none; }
.rtab.on { background: #fff; font-weight: 600; color: #000; letter-spacing: 0; }
.ctx { width: 502px; height: 50px; border: 2px solid #dcdede; border-radius: 7px; background: #fff; padding-top: 3px; }

main { display: flex; gap: 13px; padding: 12px 12px 0; height: 1710px; flex: none; }
footer { flex: 1; border-top: 2px solid #bcbcbc; background: #eee; }
.contents { width: 496px; height: 1686px; border: 2px solid #d2d4d8; border-radius: 8px 8px 0 0; background: #f7f9f8; flex: none; }
.phead { height: 64px; display: flex; align-items: center; padding-left: 11px; }
h1 { margin: 0; font-size: 30px; font-weight: 400; letter-spacing: 0.12px; color: #1d1d1d; flex: 1; }
.c2 { margin-left: 21px; }
.c3 { margin: 0 13px 0 19px; }
.searchrow { display: flex; align-items: center; height: 52px; padding-left: 6px; }
.search { margin-left: 16px; width: 436px; height: 48px; border: 2px solid #8f9291; background: #fff; display: flex; align-items: center; padding-left: 9px; font-style: italic; }
.search span { flex: 1; padding-top: 2px; letter-spacing: -0.2px; }
.sc { margin: 0 11px 0 24px; }
.ctools { height: 80px; }
.cline { margin: -3px 0 0 29px; height: 6px; width: 374px; background: linear-gradient(#f7f9f8 50%, #ccc 50%); }
.cline i { display: block; width: 64px; height: 6px; background: #007ac2; }
h2 { margin: 0 0 0 29px; height: 72px; padding-top: 13px; line-height: 58px; font-size: 26.500px; font-weight: 600; letter-spacing: -0.25px; }
.row { display: flex; align-items: center; height: 48px; }
.row.root { padding-left: 4px; }
.root svg { margin: 0 10px 0 9px; }
.open { width: 13px; height: 12px; background: #6a6a6a; clip-path: polygon(100% 0, 100% 100%, 0 100%); flex: none; }
.lay { padding-left: 26px; letter-spacing: -0.12px; }
.caps { letter-spacing: 0.1px; }
.shut { width: 13px; overflow: visible; margin-left: 3px; margin-right: -3px; }
.hid { visibility: hidden; }
.box { flex: 1; height: 48px; margin: 0 1px 0 6px; padding-left: 2px; border: 1px solid transparent; display: flex; align-items: center; }
.box.sel { background: #c6dbef; border-color: #007ac2; }
.box.sel span { padding-top: 1px; }
.chk { width: 28px; height: 28px; border: 2px solid #959595; border-radius: 5px; background: #fff; display: flex; align-items: center; justify-content: center; margin-right: 10px; }
.sw { padding-left: 56px; }
.s1 { height: 45px; padding-bottom: 5px; }
.s2 { height: 47px; padding-bottom: 5px; }
.sym { width: 40px; height: 32px; border: 1px solid rgba(255, 255, 255, 0.5); flex: none; }
.black { border: 2px solid #111; }
.crimson { border: 2px solid #b01818; }
.expansion { background: #d69dbe; }
.proteccion { background: #74b275; }
.rural { background: #ffe8bd; }
.suburbano { background: #d7c19e; }
.urbano { background: #cdcdcd; }
.rest { background: #828282; }
.suelo { height: 41px; padding: 0 0 0 54px; font-weight: 600; letter-spacing: -0.3px; }
.cls { height: 38px; padding-left: 56px; }
.cls span { margin-left: 12px; padding-top: 1px; letter-spacing: 0; }
.other { height: 56px; }
.other span { margin-left: 14px; letter-spacing: 0.3px; }
.charts { height: 47px; padding-left: 70px; font-weight: 700; letter-spacing: -0.4px; }
.chart { height: 47px; padding-left: 70px; }
.chart span { margin-left: 19px; letter-spacing: 0; }

.center { width: 1848px; flex: none; }
.tabs { height: 44px; display: flex; align-items: center; margin-left: 1px; }
.dtab { height: 44px; display: flex; align-items: center; padding: 3px 0 0 11px; }
.dtab span { padding-top: 2px; }
.dtab.on { background: #d2d3d8; border-radius: 8px 8px 0 0; }
.t1 { width: 197px; }
.t1 span { margin: 0 20px 0 9px; }
.t2 { color: #1a1a1a; flex: 1; padding-left: 12px; }
.t2 span { margin-left: 9px; letter-spacing: -0.1px; }
.t3 { width: 371px; margin-right: auto; }
.t3 span { margin: 0 18px 0 10px; }
.tchev { margin: 2px 10px 0 0; }
.strip { height: 6px; background: #d2d3d8; }
.mapwrap { border: solid #d2d3d8; border-width: 0 2px; }
.map .lot { fill: none; stroke: #000; stroke-width: 2.800px; vector-effect: non-scaling-stroke; }
.map .arc { fill: none; stroke: #a80000; stroke-width: 2px; }
.rl text { font: 28px "DejaVu Sans Condensed", "DejaVu Sans", sans-serif; font-stretch: condensed; fill: #a80000; text-anchor: middle; letter-spacing: 0; }
.zl { font: 26.500px "DejaVu Sans Condensed", "DejaVu Sans", sans-serif; font-stretch: condensed; fill: #000; letter-spacing: 0; stroke: #fff; stroke-width: 5px; stroke-linejoin: round; paint-order: stroke; }
.mapbar { height: 50px; border: 2px solid #d2d3d8; border-top: 0; background: #f7f9f8; display: flex; align-items: center; padding: 1px 0 0 10px; }
.scale { width: 200px; height: 43px; border: 2px solid #8f9291; background: #fff; color: #111; display: flex; align-items: center; justify-content: space-between; padding: 0 8px 0 11px; }
.scale span { padding-top: 1px; letter-spacing: -0.3px; }
.tri { border: 5px solid transparent; border-top: 7px solid #444; border-bottom: 0; }
.selfeat { width: 266px; height: 40px; background: #fff; display: flex; align-items: center; padding-left: 7px; }
.selfeat span { margin-left: 6px; padding-top: 1px; letter-spacing: 0.1px; }
:deep(.coord) { padding-top: 4px; letter-spacing: 0.1px; }
.tt { margin-top: 13px; }
.tpane { height: 417px; border: 2px solid #d2d3d8; border-top: 0; background: #f7f9f8; padding: 2px 2px 0; }
.ttools { height: 60px; border: 2px solid #bdbfc3; background: #eef0f2; font-size: 23px; letter-spacing: 0; }
.ttools :deep(span) { padding-top: 2px; }
.ttools { letter-spacing: -0.1px; }
:deep(.b) { font-weight: 700; letter-spacing: -0.25px; }
.table { margin-top: 2px; height: 297px; border: 2px solid #c8c8c8; background: #ebebeb; }
.tmain { display: flex; height: 252px; }
.grid { width: 1794px; overflow: hidden; }
.thead { display: flex; height: 57px; font-weight: 700; font-size: 25.500px; letter-spacing: -0.2px; }
.corner { width: 82px; height: 56px; background: #fff; border-right: 2px solid #d4d4d4; display: flex; align-items: flex-end; justify-content: flex-end; padding: 0 6px 6px 0; flex: none; }
.corner i { width: 25px; height: 25px; background: #c6c6c6; clip-path: polygon(100% 0, 100% 100%, 0 100%); }
.th { height: 57px; display: flex; align-items: center; padding-left: 9px; border-right: 2px solid #d4d4d4; flex: none; }
.th span { padding-top: 1px; }
.th.zona, .th.sid, .th.use { letter-spacing: -0.6px; }
.th.use, .td.use { border-right: 0; }
.th.dp { background: #c6e1f5; border-right: 1px solid #777; box-shadow: inset 0 -5px #007ac2; }
.asc { border: 8px solid transparent; border-bottom: 9px solid #444; border-top: 0; margin-left: auto; margin-right: 6px; }
.th.nombre { padding-left: 0; }
.tbody { height: 195px; overflow: hidden; font-size: 25px; letter-spacing: -0.05px; }
.tr { display: flex; height: 57px; background: #fff; }
.tr:first-child { margin-top: -35px; }
.tr:nth-child(2) { height: 56px; }
.tr.alt { background: #ebebeb; }
.tr.cur { background: #8affff; }
.rh { width: 82px; background: #ebebeb; border-right: 2px solid #c8c8c8; border-bottom: 2px solid #d8d8d8; padding: 1px 0 0 10px; display: flex; align-items: center; flex: none; letter-spacing: -0.6px; }
.cur .rh { background: #c6e1f5; box-shadow: inset -4px 0 #007ac2; }
.td { padding: 2px 11px 0 10px; border: solid #c8c8c8; border-width: 0 2px 2px 0; display: flex; align-items: center; flex: none; }
.td.r { padding-right: 9px; }
.td.dp { border-right: 1px solid #777; }
.td.use { letter-spacing: -0.3px; }
.cur .td.dp { background: #c6e1f5; }
.in { flex: 1; overflow: hidden; display: flex; min-width: 0; }
.r .in { justify-content: flex-end; }
.vs { flex: 1; display: flex; flex-direction: column; align-items: center; padding-top: 17px; }
.vs i { width: 22px; height: 50px; border-radius: 11px; background: #b3b3b3; margin: 20px 0 0; }
.dn { margin-top: 131px; }
.hs { height: 41px; display: flex; align-items: center; padding-left: 16px; }
.hs i { width: 837px; height: 22px; border-radius: 11px; background: #b3b3b3; margin-left: 551px; }
.rt { margin-left: 356px; }
.status { height: 56px; display: flex; align-items: center; padding-top: 1px; }
:deep(.stat) { padding-top: 3px; letter-spacing: 0.15px; }
.allbtn { width: 64px; height: 44px; border: 2px solid #35aaf0; background: #c4c5c9; display: flex; align-items: center; justify-content: center; }
.dis { width: 84px; height: 48px; background: #eef0f2; display: flex; align-items: center; justify-content: space-between; padding: 0 4px 0 8px; }
.pct { width: 119px; height: 44px; background: #fff; color: #222; display: flex; align-items: center; justify-content: space-between; padding: 2px 9px 0 12px; }

.right { width: 678px; flex: none; }
.rpanel { height: 1646px; border: 2px solid #d2d4d8; border-radius: 8px 8px 0 0; background: #f7f9f8; display: flex; flex-direction: column; }
.cname { height: 32px; display: flex; align-items: center; font-size: 28px; letter-spacing: -0.35px; flex: none; }
.cname span { margin-left: 265px; flex: 1; }
.cname svg { margin-right: 16px; }
.ltabs { height: 66px; display: flex; align-items: flex-end; padding-left: 13px; font-size: 23.500px; letter-spacing: -0.25px; flex: none; }
.ltabs span { line-height: 50px; height: 49px; }
.ltabs .on { width: 59px; font-weight: 600; letter-spacing: -0.4px; box-shadow: inset 0 -4px #007ac2; }
.ltabs svg { margin: 0 0 15px 16px; }
.sy { margin-left: 33px; width: 104px; }
.ltools { height: 62px; margin-top: 18px; flex: none; }
.lline { width: 192px; height: 6px; margin: 5px 0 0 15px; background: linear-gradient(#f7f9f8 60%, #ccc 60%); flex: none; }
.lline i { display: block; width: 64px; height: 6px; background: #007ac2; margin-left: 64px; }
.ftools { height: 98px; flex: none; }
:deep(.ft) { padding-top: 2px; font-size: 22.800px; }
.sqlrow { height: 38px; display: flex; align-items: center; padding-left: 15px; flex: none; }
.sqlrow span { margin-left: auto; padding-top: 1px; letter-spacing: -0.3px; }
.toggle { width: 52px; height: 28px; border-radius: 14px; background: #007ac2; padding: 2px; margin: 0 21px 0 8px; display: flex; justify-content: flex-end; }
.toggle i { width: 24px; height: 24px; border-radius: 50%; background: #fff; }
.code { width: 652px; height: 150px; margin: 15px 0 0 11px; border: 2px solid #8f9291; background: #fff; flex: none; }
pre { margin: 0; display: inline-block; width: 507px; height: 32px; line-height: 32px; background: #e4e9f1; font-family: "DejaVu Sans Mono", monospace; font-size: 21.600px; letter-spacing: 0; color: #000; }
pre em { color: #0070c0; }
pre b { color: #800000; }
pre u { color: #808080; }
.learn { color: #005e95; margin: 974px 0 0 11px; line-height: 34px; letter-spacing: 0.1px; }
.btns { display: flex; justify-content: flex-end; gap: 16px; margin-top: 27px; }
.btns div { width: 140px; height: 48px; line-height: 47px; border: 2px solid #aeb1b0; background: #fafcfb; color: #c8c8c8; text-align: center; }
.dock { display: flex; height: 41px; padding-left: 2px; line-height: 42px; letter-spacing: 0; }
.dock .on { color: #007ac2; background: #f7f9f8; border: 2px solid #d2d4d8; border-top: 0; border-radius: 0 0 8px 8px; margin-top: -2px; height: 43px; line-height: 46px; }
</style>
